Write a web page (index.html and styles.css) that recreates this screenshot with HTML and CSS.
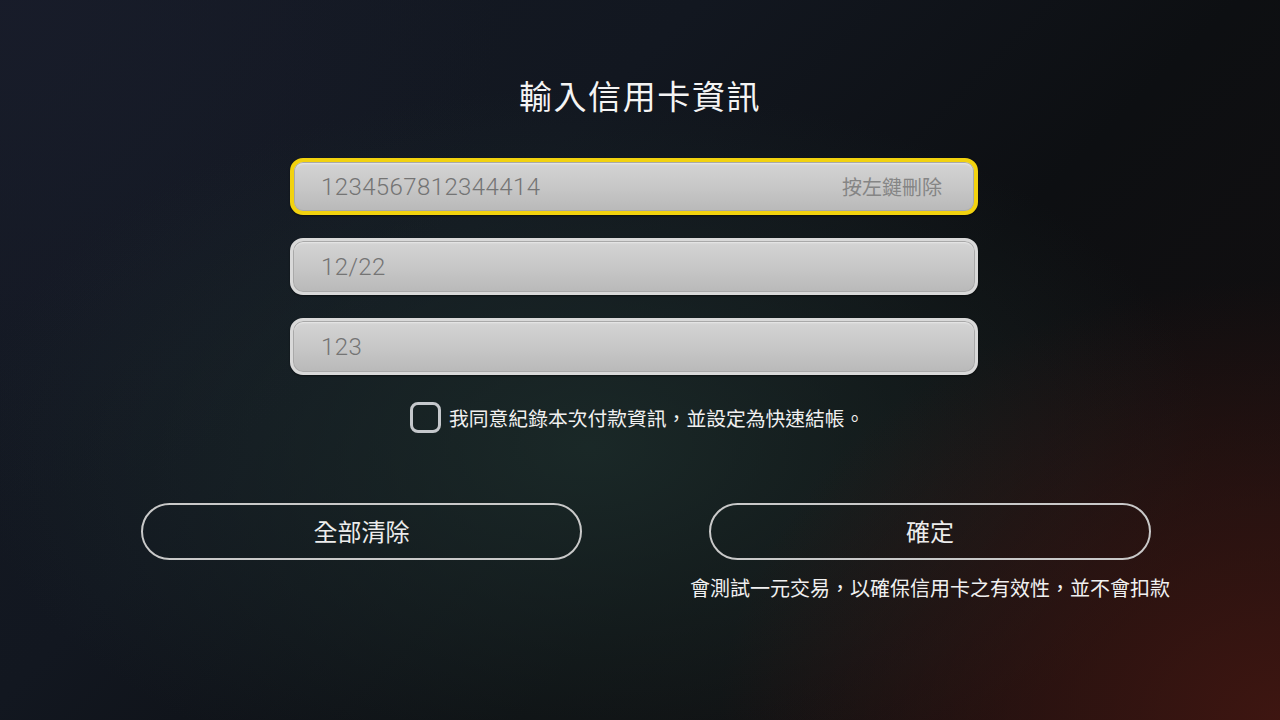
FILE: index.html
```html
<!DOCTYPE html>
<html lang="zh-Hant">
<head>
<meta charset="utf-8">
<title>輸入信用卡資訊</title>
<link rel="stylesheet" href="styles.css">
</head>
<body>
<main class="screen">
  <h1 class="title">輸入信用卡資訊</h1>
  <div class="fields">
    <div class="field field-focused">
      <span class="field-value">1234567812344414</span>
      <span class="field-hint">按左鍵刪除</span>
    </div>
    <div class="field">
      <span class="field-value">12/22</span>
    </div>
    <div class="field">
      <span class="field-value">123</span>
    </div>
  </div>
  <label class="agree">
    <span class="checkbox"></span>
    <span class="agree-text">我同意紀錄本次付款資訊，並設定為快速結帳。</span>
  </label>
  <div class="actions">
    <div class="action">
      <button class="btn">全部清除</button>
    </div>
    <div class="action">
      <button class="btn">確定</button>
      <p class="note">會測試一元交易，以確保信用卡之有效性，並不會扣款</p>
    </div>
  </div>
</main>
</body>
</html>
```
FILE: styles.css
```css
html, body {
  margin: 0;
  padding: 0;
}
body {
  width: 1280px;
  height: 720px;
  overflow: hidden;
  font-family: Roboto, "Noto Sans CJK TC", sans-serif;
  color: #f0f0f0;
  background:
    radial-gradient(ellipse 560px 440px at 100% 100%, rgba(64, 22, 17, 0.95), rgba(64, 22, 17, 0) 100%),
    radial-gradient(ellipse 620px 360px at 46% 62%, rgba(28, 44, 42, 0.85), rgba(28, 44, 42, 0) 100%),
    radial-gradient(ellipse 500px 500px at 0% 0%, rgba(24, 28, 42, 0.9), rgba(24, 28, 42, 0) 100%),
    linear-gradient(135deg, #151a25 0%, #121720 35%, #0d0f12 62%, #140e0e 100%);
}
.screen {
  display: flex;
  flex-direction: column;
  align-items: flex-start;
  height: 720px;
  box-sizing: border-box;
  padding-top: 78px;
}
.title {
  align-self: center;
  margin: 0;
  font-size: 33px;
  line-height: 40px;
  font-weight: 400;
  letter-spacing: 1.6px;
  color: #f4f4f4;
}
.fields {
  margin: 40px 0 0 290px;
  width: 688px;
  display: flex;
  flex-direction: column;
  gap: 23px;
}
.field {
  height: 57px;
  box-sizing: border-box;
  border: 3px solid #d9d9d9;
  border-radius: 13px;
  background: linear-gradient(180deg, #d4d4d4 0%, #c9c9c9 45%, #b9b9b9 100%);
  box-shadow: inset 0 0 0 1px #a9a9a9, inset 0 2px 2px rgba(255,255,255,0.5), 0 1px 2px rgba(0,0,0,0.5);
  display: flex;
  align-items: center;
  justify-content: space-between;
  padding: 0 33px 0 28px;
}
.field-focused {
  border: 4px solid #f2d20f;
  padding: 0 32px 0 27px;
}
.field-value {
  font-size: 24px;
  font-weight: 300;
  color: #747474;
  letter-spacing: 0.4px;
}
.field-hint {
  font-size: 20px;
  color: #858585;
}
.agree {
  margin: 27px 0 0 410px;
  display: flex;
  align-items: center;
  gap: 8px;
}
.checkbox {
  width: 31px;
  height: 31px;
  box-sizing: border-box;
  border: 3px solid #c5c8cc;
  border-radius: 8px;
}
.agree-text {
  font-size: 19.8px;
  color: #f0f0f0;
}
.actions {
  margin: 70px 0 0 141px;
  display: grid;
  grid-template-columns: 441px 442px;
  column-gap: 127px;
}
.action {
  display: flex;
  flex-direction: column;
  align-items: center;
}
.btn {
  width: 100%;
  height: 57px;
  box-sizing: border-box;
  border: 2.5px solid #c9c9c9;
  border-radius: 29px;
  background: transparent;
  color: #ececec;
  font-family: Roboto, "Noto Sans CJK TC", sans-serif;
  font-size: 24px;
  padding: 0 0 3px;
}
.note {
  margin: 15px -40px 0;
  font-size: 20px;
  line-height: 28px;
  white-space: nowrap;
  color: #f0f0f0;
}
```
